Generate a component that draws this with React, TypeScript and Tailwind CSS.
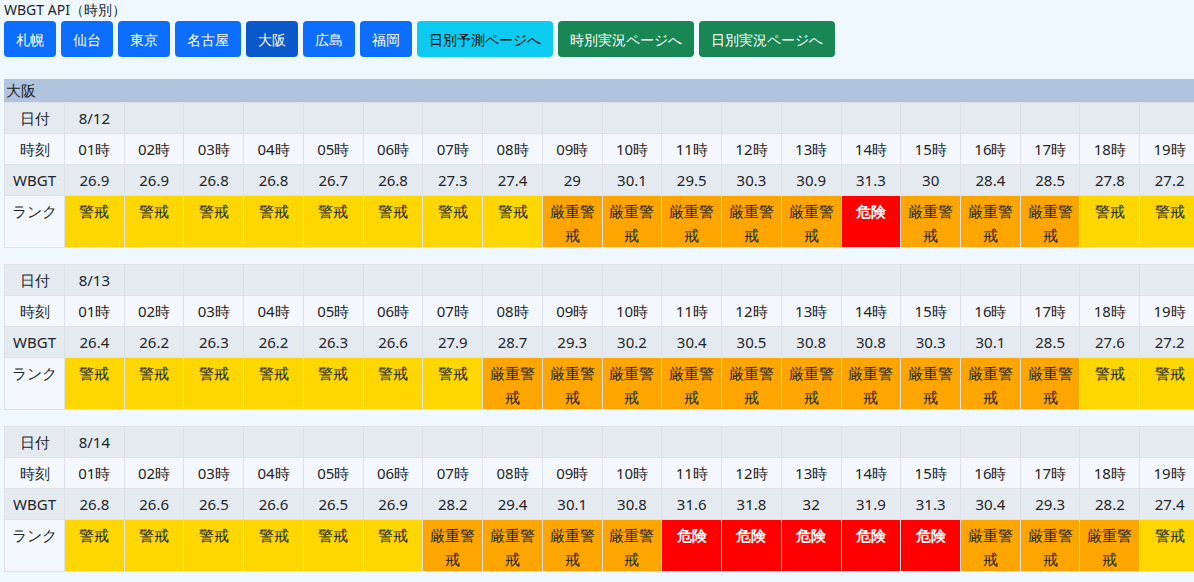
import React from "react";

const days: { d: string; v: number[] }[] = [
  { d: "8/12", v: [26.9, 26.9, 26.8, 26.8, 26.7, 26.8, 27.3, 27.4, 29, 30.1, 29.5, 30.3, 30.9, 31.3, 30, 28.4, 28.5, 27.8, 27.2] },
  { d: "8/13", v: [26.4, 26.2, 26.3, 26.2, 26.3, 26.6, 27.9, 28.7, 29.3, 30.2, 30.4, 30.5, 30.8, 30.8, 30.3, 30.1, 28.5, 27.6, 27.2] },
  { d: "8/14", v: [26.8, 26.6, 26.5, 26.6, 26.5, 26.9, 28.2, 29.4, 30.1, 30.8, 31.6, 31.8, 32, 31.9, 31.3, 30.4, 29.3, 28.2, 27.4] },
];

const cities = ["札幌", "仙台", "東京", "名古屋", "大阪", "広島", "福岡"];

function rank(v: number) {
  if (v >= 31) return { t: "危険", c: "bg-[#ff0000] text-white font-bold" };
  if (v >= 28) return { t: "厳重警戒", c: "bg-[#ffa500] text-[#212529]" };
  return { t: "警戒", c: "bg-[#ffd700] text-[#212529]" };
}

const cell = "border border-[#dee2e6] px-1 py-[3px] text-center leading-[24px] align-top overflow-hidden";
const rcell = "border border-[#dee2e6] px-1 pt-[3px] pb-0 text-center leading-[24px] align-top overflow-hidden";

function Day({ d, v }: { d: string; v: number[] }) {
  return (
    <table className="table-fixed border-collapse w-[1196px] text-[15px] text-[#212529]">
      <colgroup>
        <col className="w-[60px]" />
        {v.map((_, i) => (
          <col key={i} />
        ))}
      </colgroup>
      <tbody>
        <tr className="bg-[#e5eaf1]">
          <td className={cell}>日付</td>
          <td className={cell}>{d}</td>
          {v.slice(1).map((_, i) => (
            <td key={i} className={cell}></td>
          ))}
        </tr>
        <tr className="bg-[#f4f8fc]">
          <td className={cell}>時刻</td>
          {v.map((_, i) => (
            <td key={i} className={cell}>{String(i + 1).padStart(2, "0")}時</td>
          ))}
        </tr>
        <tr className="bg-[#e5eaf1]">
          <td className={cell}>WBGT</td>
          {v.map((x, i) => (
            <td key={i} className={cell}>{x}</td>
          ))}
        </tr>
        <tr className="bg-[#f4f8fc]">
          <td className={rcell}>ランク</td>
          {v.map((x, i) => {
            const r = rank(x);
            return (
              <td key={i} className={`${rcell} ${r.c}`}>
                <div className="h-[48px]">{r.t}</div>
              </td>
            );
          })}
        </tr>
      </tbody>
    </table>
  );
}

export default function App() {
  return (
    <div className="min-h-[582px] w-[1194px] overflow-hidden bg-[#f0f8ff] px-1 font-['Noto_Sans_CJK_JP',sans-serif]">
      <div className="text-[14px] leading-5 text-[#212529]">WBGT API（時別）</div>
      <div className="flex gap-[5px] mt-[1px]">
        {cities.map((c) => (
          <button
            key={c}
            className={`h-9 rounded-[4px] px-3 text-[14px] text-white ${c === "大阪" ? "bg-[#0a58ca]" : "bg-[#0d6efd]"}`}
          >
            {c}
          </button>
        ))}
        <button className="h-9 rounded-[4px] px-3 text-[14px] text-black bg-[#0dcaf0]">日別予測ページへ</button>
        <button className="h-9 rounded-[4px] px-3 text-[14px] text-white bg-[#198754]">時別実況ページへ</button>
        <button className="h-9 rounded-[4px] px-3 text-[14px] text-white bg-[#198754]">日別実況ページへ</button>
      </div>
      <div className="mt-[22px] h-[23px] bg-[#b0c4de] text-[15px] leading-[23px] pl-[2px] text-[#212529] w-[1196px]">大阪</div>
      <div className="flex flex-col gap-4">
        {days.map((x) => (
          <Day key={x.d} d={x.d} v={x.v} />
        ))}
      </div>
    </div>
  );
}
